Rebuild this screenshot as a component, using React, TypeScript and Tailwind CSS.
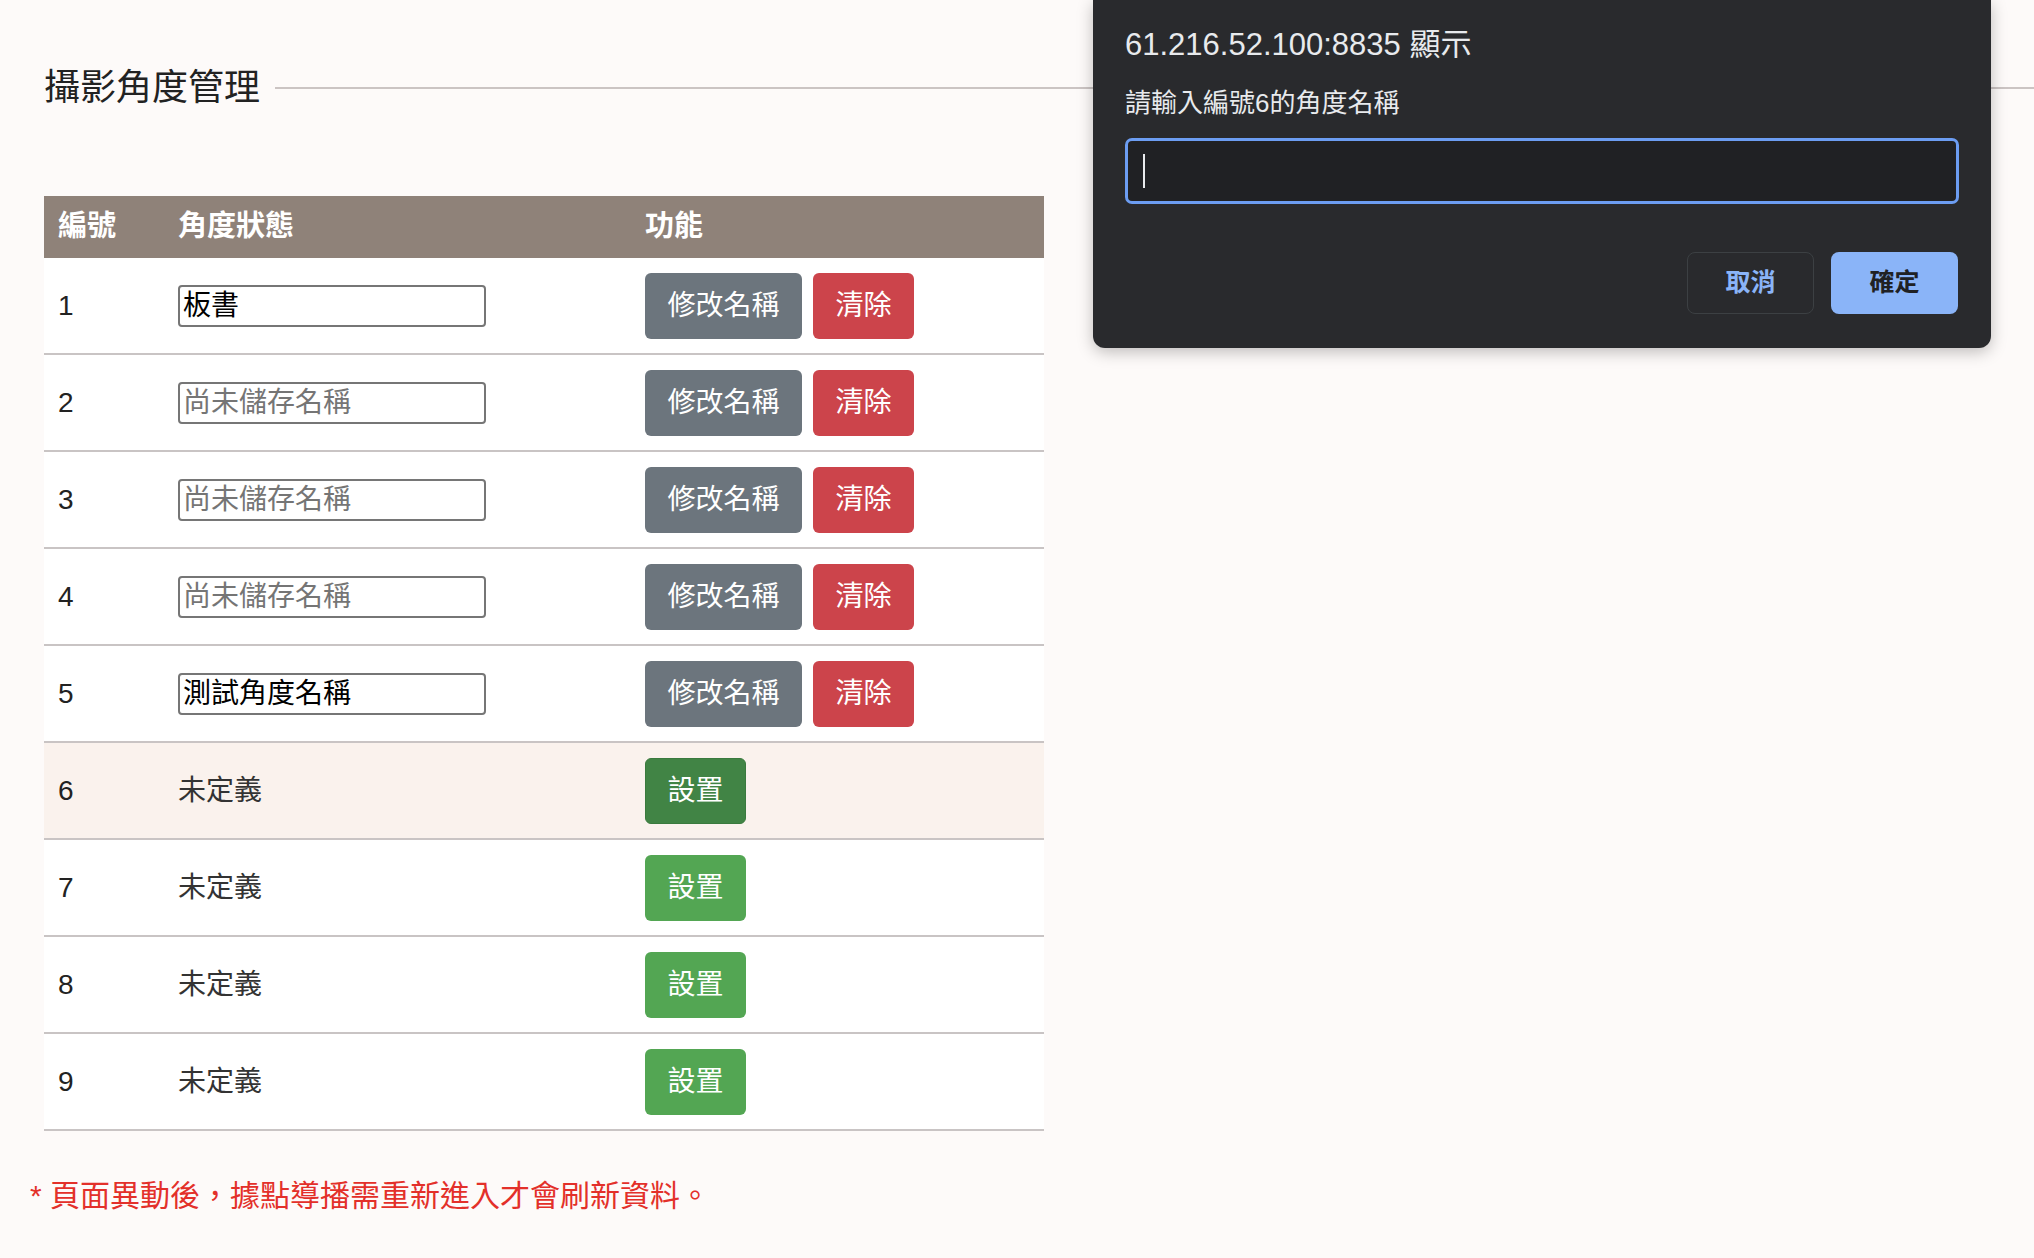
import React from "react"

/* ===== Data ===== */
type Row = { id: number; name?: string; saved: boolean }

const rows: Row[] = [
  { id: 1, name: "板書", saved: true },
  { id: 2, saved: true },
  { id: 3, saved: true },
  { id: 4, saved: true },
  { id: 5, name: "測試角度名稱", saved: true },
  { id: 6, saved: false },
  { id: 7, saved: false },
  { id: 8, saved: false },
  { id: 9, saved: false },
]

const font = {
  fontFamily: '"Liberation Sans", "Noto Sans CJK TC", sans-serif',
}

/* ===== Prompt dialog ===== */
function PromptDialog() {
  return (
    <div className="absolute top-0 left-[1093px] w-[898px] h-[348px] bg-[#292a2d] rounded-b-[12px] shadow-[0_4px_16px_rgba(0,0,0,0.25)] px-[32px] pt-[24px]">
      <div className="text-[31px] leading-[42px] text-[#e8eaed]">
        61.216.52.100:8835 顯示
      </div>
      <div className="mt-[20px] text-[26px] leading-[34px] text-[#e8eaed]">
        請輸入編號6的角度名稱
      </div>
      <div className="mt-[18px] h-[66px] w-[834px] rounded-[7px] border-[3px] border-[#6c9df2] bg-[#202124] flex items-center pl-[15px]">
        <div className="w-[2px] h-[34px] bg-[#e8eaed]" />
      </div>
      <div className="mt-[48px] flex justify-end gap-[17px] pr-[1px]">
        <button className="w-[127px] h-[62px] rounded-[8px] border border-[#3c4043] text-[#8ab4f8] text-[25px] font-bold">
          取消
        </button>
        <button className="w-[127px] h-[62px] rounded-[8px] bg-[#8ab4f8] text-[#202124] text-[25px] font-bold">
          確定
        </button>
      </div>
    </div>
  )
}

/* ===== Page ===== */
export default function App() {
  return (
    <div
      className="relative w-[2034px] h-[1258px] bg-[#fdfaf9] overflow-hidden"
      style={font}
    >
      {/* Title */}
      <div className="flex items-center pt-[63px] pl-[44px]">
        <h2 className="text-[36px] leading-[50px] text-[#222] pr-[15px]">
          攝影角度管理
        </h2>
        <div className="flex-1 h-[2px] bg-[#cbc4c3]" />
      </div>

      {/* Table */}
      <div className="ml-[44px] mt-[83px] w-[1000px] bg-white">
        <div className="grid grid-cols-[134px_467px_1fr] h-[62px] items-center bg-[#8f8279] text-white text-[29px] font-bold">
          <div className="pl-[14px]">編號</div>
          <div>角度狀態</div>
          <div>功能</div>
        </div>
        {rows.map((row) => (
          <div
            key={row.id}
            className={
              row.id === 6
                ? "grid grid-cols-[134px_467px_1fr] h-[97px] items-center border-b-2 border-[#c9c4c4] bg-[#faf2ed] text-[28px] text-[#222]"
                : "grid grid-cols-[134px_467px_1fr] h-[97px] items-center border-b-2 border-[#c9c4c4] text-[28px] text-[#222]"
            }
          >
            <div className="pl-[14px]">{row.id}</div>
            <div>
              {row.saved ? (
                <input
                  readOnly
                  value={row.name ?? ""}
                  placeholder="尚未儲存名稱"
                  className="w-[308px] h-[42px] border-2 border-[#767676] rounded-[4px] px-[3px] text-[28px] text-black placeholder:text-[#757575] outline-none bg-white"
                  style={font}
                />
              ) : (
                <span className="text-[#333]">未定義</span>
              )}
            </div>
            <div className="flex gap-[11px]">
              {row.saved ? (
                <>
                  <button className="w-[157px] h-[66px] rounded-[6px] bg-[#6c757d] text-white text-[28px]">
                    修改名稱
                  </button>
                  <button className="w-[101px] h-[66px] rounded-[6px] bg-[#cc444b] text-white text-[28px]">
                    清除
                  </button>
                </>
              ) : (
                <button
                  className={
                    row.id === 6
                      ? "w-[101px] h-[66px] rounded-[6px] bg-[#418445] border border-[#3a7a3e] text-white text-[28px]"
                      : "w-[101px] h-[66px] rounded-[6px] bg-[#53a653] text-white text-[28px]"
                  }
                >
                  設置
                </button>
              )}
            </div>
          </div>
        ))}
      </div>

      {/* Note */}
      <p className="mt-[45px] ml-[30px] text-[30px] leading-[40px] text-[#e3302a]">
        * 頁面異動後，據點導播需重新進入才會刷新資料。
      </p>

      <PromptDialog />
    </div>
  )
}
